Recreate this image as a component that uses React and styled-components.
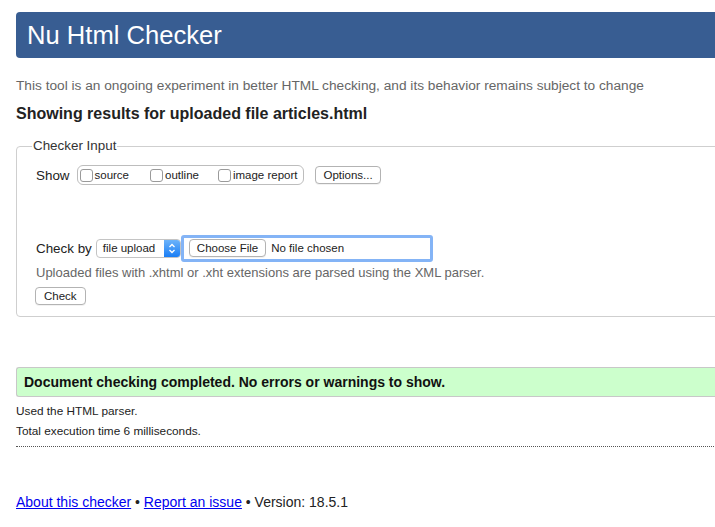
import React from "react";
import styled, { createGlobalStyle } from "styled-components";

const GlobalStyle = createGlobalStyle`
  html, body {
    margin: 0;
    padding: 0;
    overflow: hidden;
    background: #fff;
  }
  body {
    font-family: "Liberation Sans", Arial, Helvetica, sans-serif;
    color: #222;
  }
`;

const Page = styled.div`
  width: 760px;
  padding: 12px 0 0 16px;
`;

const Header = styled.h1`
  margin: 0;
  height: 46px;
  line-height: 46px;
  padding-left: 11px;
  background: #385d92;
  color: #fff;
  font-size: 25.6px;
  font-weight: normal;
  border-radius: 4px 0 0 4px;
`;

const Intro = styled.p`
  margin: 19px 0 0;
  line-height: 18px;
  font-size: 13.7px;
  color: #666;
`;

const Heading = styled.h2`
  margin: 9px 0 0;
  line-height: 20px;
  font-size: 16px;
  font-weight: bold;
  color: #222;
`;

const Fieldset = styled.fieldset`
  margin: 14px 0 0;
  padding: 0 19px 11px 19px;
  border: 1px solid #cfcfcf;
  border-radius: 4px 0 0 4px;
  min-width: 0;
`;

const Legend = styled.legend`
  padding: 0 1px;
  margin-left: -4px;
  font-size: 13.4px;
  line-height: 16px;
  color: #333;
`;

const Row = styled.div`
  display: flex;
  align-items: center;
  height: ${(p) => p.$h}px;
  margin-top: ${(p) => p.$mt}px;
`;

const Label = styled.span`
  font-size: 13.4px;
  color: #222;
  margin-right: ${(p) => p.$mr || 4}px;
`;

const Pill = styled.div`
  display: flex;
  align-items: center;
  height: 18px;
  padding: 0 6px 0 2px;
  border: 1px solid #bdbdbd;
  border-radius: 6px;
`;

const CheckItem = styled.label`
  display: flex;
  align-items: center;
  font-size: 11.5px;
  color: #222;
  margin-right: ${(p) => p.$mr || 0}px;
`;

const Box = styled.span`
  display: inline-block;
  width: 11px;
  height: 11px;
  border: 1px solid #9a9a9a;
  border-radius: 3px;
  background: #fff;
  margin-right: 2px;
`;

const Button = styled.span`
  display: inline-flex;
  align-items: center;
  justify-content: center;
  height: 16px;
  padding: 0 ${(p) => p.$px || 7}px;
  border: 1px solid #b3b3b3;
  border-radius: 4px;
  background: #fff;
  font-size: 11.5px;
  color: #222;
  box-shadow: 0 1px 0 rgba(0, 0, 0, 0.05);
  margin-left: ${(p) => p.$ml || 0}px;
`;

const Select = styled.span`
  display: inline-flex;
  align-items: stretch;
  width: 85px;
  height: 19px;
  box-sizing: border-box;
  border: 1px solid #c4c4c4;
  border-radius: 4px;
  overflow: hidden;
  background: #fff;
`;

const SelectText = styled.span`
  flex: 1;
  display: flex;
  align-items: center;
  padding-left: 6px;
  font-size: 11.5px;
  color: #222;
`;

const SelectArrow = styled.span`
  width: 16px;
  display: flex;
  align-items: center;
  justify-content: center;
  background: linear-gradient(#6cb3fa, #1a7ef5);
`;

const FileBox = styled.span`
  display: inline-flex;
  align-items: center;
  width: 252px;
  height: 27px;
  box-sizing: border-box;
  padding-left: 5px;
  border: 3px solid #84b4f6;
  border-radius: 3px;
  gap: 5px;
`;

const NoFile = styled.span`
  font-size: 11.5px;
  color: #222;
`;

const Help = styled.p`
  margin: 2px 0 0;
  line-height: 18px;
  font-size: 13px;
  color: #666;
`;

const Success = styled.div`
  margin-top: 50px;
  height: 28px;
  line-height: 28px;
  padding-left: 7px;
  background: #ccffcc;
  border: 1px solid #c8c8c8;
  border-right: none;
  border-radius: 3px 0 0 3px;
  font-size: 14px;
  font-weight: bold;
  color: #111;
`;

const Stat = styled.p`
  margin: ${(p) => p.$mt}px 0 0;
  line-height: 14px;
  font-size: 11.8px;
  color: #222;
`;

const Rule = styled.hr`
  margin: 8px 0 0;
  border: none;
  border-top: 1px dotted #555;
  height: 0;
`;

const Footer = styled.p`
  margin: 46px 0 0;
  line-height: 18px;
  font-size: 14px;
  color: #222;

  a {
    color: #0000ee;
    text-decoration: underline;
  }
`;

const Chevrons = () => (
  <svg width="8" height="11" viewBox="0 0 8 11">
    <path d="M1.5 4 L4 1.5 L6.5 4 M1.5 7 L4 9.5 L6.5 7" fill="none" stroke="#fff" strokeWidth="1.3" />
  </svg>
);

export default function App() {
  return (
    <>
      <GlobalStyle />
      <Page>
        <Header>Nu Html Checker</Header>
        <Intro>
          This tool is an ongoing experiment in better HTML checking, and its behavior remains subject to change
        </Intro>
        <Heading>Showing results for uploaded file articles.html</Heading>

        <Fieldset>
          <Legend>Checker Input</Legend>
          <Row $h={22} $mt={10}>
            <Label $mr={7}>Show</Label>
            <Pill>
              <CheckItem $mr={21}>
                <Box />
                source
              </CheckItem>
              <CheckItem $mr={19}>
                <Box />
                outline
              </CheckItem>
              <CheckItem>
                <Box />
                image report
              </CheckItem>
            </Pill>
            <Button $ml={11} $px={7}>Options...</Button>
          </Row>

          <Row $h={28} $mt={48}>
            <Label $mr={4}>Check by</Label>
            <Select>
              <SelectText>file upload</SelectText>
              <SelectArrow>
                <Chevrons />
              </SelectArrow>
            </Select>
            <FileBox>
              <Button $px={7}>Choose File</Button>
              <NoFile>No file chosen</NoFile>
            </FileBox>
          </Row>

          <Help>Uploaded files with .xhtml or .xht extensions are parsed using the XML parser.</Help>
          <Row $h={18} $mt={5}>
            <Button $px={8} style={{ marginLeft: -1 }}>Check</Button>
          </Row>
        </Fieldset>

        <Success>Document checking completed. No errors or warnings to show.</Success>
        <Stat $mt={7}>Used the HTML parser.</Stat>
        <Stat $mt={6}>Total execution time 6 milliseconds.</Stat>
        <Rule />

        <Footer>
          <a href="#about">About this checker</a> • <a href="#report">Report an issue</a> • Version: 18.5.1
        </Footer>
      </Page>
    </>
  );
}
